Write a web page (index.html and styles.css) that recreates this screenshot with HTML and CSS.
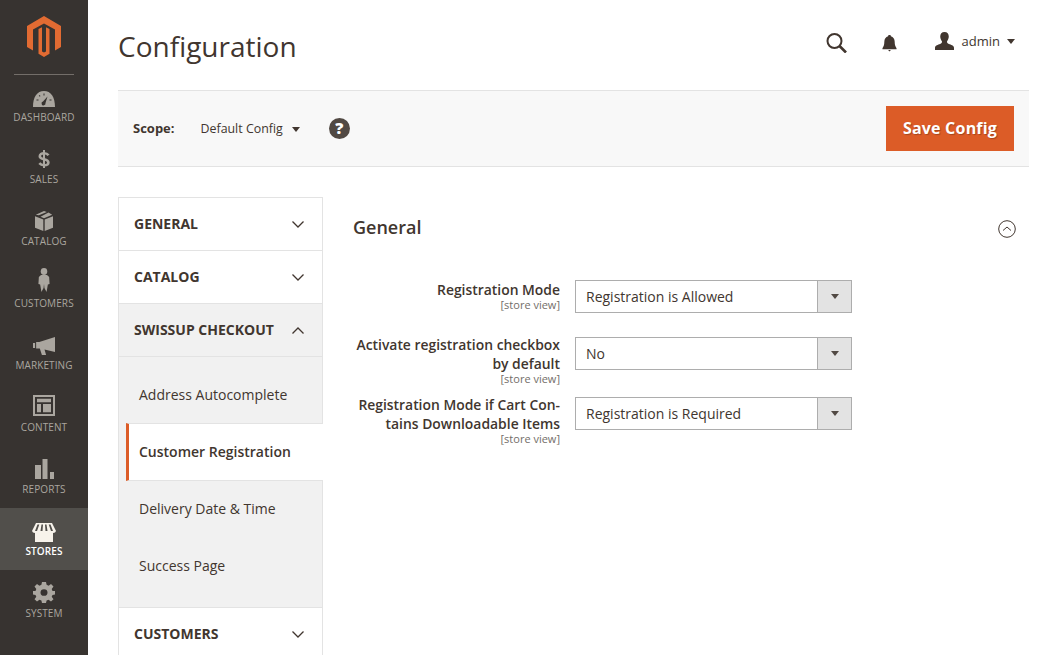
FILE: index.html
```html
<!DOCTYPE html>
<html lang="en">
<head>
<meta charset="utf-8">
<title>Configuration</title>
<link rel="stylesheet" href="styles.css">
</head>
<body>
<div class="app">
  <nav class="sidebar">
    <div class="logo">
      <svg width="36" height="42" viewBox="0 0 36 42"><path fill="#e26b32" d="M18 0 35 10V31L29 34.500V13.500L18 7.500 7 13.500V34.500L1 31V10Z"/><path fill="#e26b32" d="M12.500 13 16 11.200V35.500L18 36.500 20 35.500V11.200L23.500 13V37.800L18 41 12.500 37.800Z"/></svg>
    </div>
    <a class="nav-item"><svg class="nav-icon" width="22" height="16" viewBox="0 0 22 16"><path fill="#aaa69f" fill-rule="evenodd" d="M0 16C0 6 4 0 11 0s11 6 11 16zM14.500 5.500 10 10.500a2 2 0 1 0 2.500 1.500z"/><path fill="#373330" d="M3.500 8.500h2v1h-2zM6.500 4l1 1-.7.700-1-1zM10.500 2.500h1v2h-1zM16.500 8.500h2v1h-2z"/></svg><span>DASHBOARD</span></a>
    <a class="nav-item"><svg class="nav-icon nav-icon-low" width="12" height="18" viewBox="0 0 12 18"><path fill="#aaa69f" d="M5 0h2v18H5z"/><path fill="none" stroke="#aaa69f" stroke-width="2.600" d="M10.500 5.200C9.500 3.800 8 3.200 6 3.200 3.500 3.200 1.800 4.400 1.800 6.200 1.800 8.200 3.500 8.600 6 9.200 8.700 9.800 10.400 10.400 10.400 12.400 10.400 14.200 8.500 15.200 6 15.200 4 15.200 2.400 14.400 1.300 13.200"/></svg><span>SALES</span></a>
    <a class="nav-item"><svg class="nav-icon" width="18" height="20" viewBox="1 0 18 21" preserveAspectRatio="none"><path fill="#aaa69f" d="M1 5.500 9.300 9v12L1 17.500zM19 5.500 10.700 9v12l8.300-3.500zM10 0l2.800 1-8 3.400L1.800 4zM14.500 1.700 18.200 4 10 7.500 6.500 6z"/></svg><span>CATALOG</span></a>
    <a class="nav-item"><svg class="nav-icon nav-icon-low" width="12" height="24" viewBox="0 0 14 24" preserveAspectRatio="none"><ellipse fill="#aaa69f" cx="7" cy="3.500" rx="3.800" ry="3.400"/><path fill="#aaa69f" d="M3.500 7h7l2.500 2 .5 7-2 .5L10 24 7.500 20 7 16 6.500 20 4 24 2.500 16.500l-2-.5.500-7z"/></svg><span>CUSTOMERS</span></a>
    <a class="nav-item"><svg class="nav-icon" width="22" height="18" viewBox="1 1 21 18" preserveAspectRatio="none"><path fill="#aaa69f" d="M1 7h2v5H1zM4 6h3l15-5v15L12 13.500 13.500 19H9.500L7.500 12.500H4z"/></svg><span>MARKETING</span></a>
    <a class="nav-item"><svg class="nav-icon nav-icon-low" width="22" height="21" viewBox="0 0 22 22" preserveAspectRatio="none"><path fill="#aaa69f" fill-rule="evenodd" d="M0 0h22v22H0zM2 2v18h18V2z"/><path fill="#aaa69f" d="M4 4h14v3.500H4zM4 9.500h4V18H4zM10 9.500h8V18h-8z"/></svg><span>CONTENT</span></a>
    <a class="nav-item"><svg class="nav-icon" width="19" height="20" viewBox="0 0 19 20"><path fill="#aaa69f" d="M0 6h6v14H0zM7.500 0h5v20h-5zM15 13h4.500v7H15z"/></svg><span>REPORTS</span></a>
    <a class="nav-item active"><svg class="nav-icon nav-icon-high" width="24" height="19" viewBox="0 0 24 20" preserveAspectRatio="none"><path fill="#f7f3eb" fill-rule="evenodd" d="M4 0h16l4 8.500-1 1.500-2 .5V20H3V10.500L1 10 0 8.500zM5.500 1.500 3 8.500h2l2.300-7zM9.500 1.500 8.500 8.500h2l.5-7zM13 1.500l.5 7h2l-1-7zM16.700 1.500 19 8.500h2l-2.500-7z"/></svg><span>STORES</span></a>
    <a class="nav-item"><svg class="nav-icon" width="22" height="21" viewBox="0 0 22 22" preserveAspectRatio="none"><path fill="#aaa69f" fill-rule="evenodd" d="M9 0h4l.6 3 2 .8L18 2l2.500 2.800-1.800 2.500.8 2L22 9.500v3.500l-2.500.5-.8 2 1.800 2.500L18 20.500l-2.400-1.800-2 .8L13 22H9l-.6-2.500-2-.8L4 20.500 1.500 18l1.800-2.500-.8-2L0 13V9.500l2.500-.2.8-2L1.500 4.800 4 2l2.400 1.800 2-.8zM11 7.500a3.500 3.500 0 1 0 0 7 3.500 3.500 0 0 0 0-7z"/></svg><span>SYSTEM</span></a>
  </nav>

  <main class="main">
    <header class="page-header">
      <h1 class="page-title">Configuration</h1>
      <div class="header-actions">
        <svg class="search-icon" width="21" height="20" viewBox="0 0 21 20"><circle cx="8.500" cy="8" r="7" fill="none" stroke="#41362f" stroke-width="2"/><path d="M13.500 13l6.500 6.500" stroke="#41362f" stroke-width="2.600" fill="none"/></svg>
        <svg class="bell-icon" width="15" height="17" viewBox="0 0 16 18" preserveAspectRatio="none"><path fill="#41362f" d="M8 0c1 0 1.500.6 1.500 1.300C12 2 13.500 4 13.500 7c0 4 1 5.500 2 7v1H.5v-1c1-1.500 2-3 2-7 0-3 1.500-5 4-5.700C6.500.6 7 0 8 0zM6.500 16h3L8 17.500z"/></svg>
        <div class="user">
          <svg class="user-icon" width="19" height="18" viewBox="0 0 20 20" preserveAspectRatio="none"><path fill="#41362f" d="M10 0c3 0 4.500 2 4.500 5 0 2-.8 4-1.800 5.200-.3 1.500.3 2.300 2 3 2 .8 5.300 1.500 5.300 4.300V20H0v-2.500c0-2.800 3.300-3.500 5.300-4.300 1.700-.7 2.300-1.500 2-3C6.300 9 5.500 7 5.500 5c0-3 1.500-5 4.500-5z"/></svg>
          <span class="user-name">admin</span>
          <span class="caret"></span>
        </div>
      </div>
    </header>

    <section class="actions-bar">
      <span class="scope-label">Scope:</span>
      <span class="scope-value">Default Config</span>
      <span class="caret caret-scope"></span>
      <span class="help">?</span>
      <button class="save-btn" type="button">Save Config</button>
    </section>

    <div class="columns">
      <aside class="tabs">
        <div class="tab"><span>GENERAL</span><svg class="chev" width="12" height="7" viewBox="0 0 12 7"><path d="M.5.500 6 6l5.500-5.500" fill="none" stroke="#41362f" stroke-width="1.300"/></svg></div>
        <div class="tab"><span>CATALOG</span><svg class="chev" width="12" height="7" viewBox="0 0 12 7"><path d="M.5.500 6 6l5.500-5.500" fill="none" stroke="#41362f" stroke-width="1.300"/></svg></div>
        <div class="tab tab-open"><span>SWISSUP CHECKOUT</span><svg class="chev" width="12" height="7" viewBox="0 0 12 7"><path d="M.5 6.500 6 1l5.500 5.500" fill="none" stroke="#41362f" stroke-width="1.300"/></svg></div>
        <div class="subtabs">
          <a class="subtab subtab-first">Address Autocomplete</a>
          <a class="subtab subtab-current">Customer Registration</a>
          <a class="subtab">Delivery Date &amp; Time</a>
          <a class="subtab">Success Page</a>
        </div>
        <div class="tab"><span>CUSTOMERS</span><svg class="chev" width="12" height="7" viewBox="0 0 12 7"><path d="M.5.500 6 6l5.500-5.500" fill="none" stroke="#41362f" stroke-width="1.300"/></svg></div>
      </aside>

      <section class="panel">
        <div class="panel-head">
          <h2 class="panel-title">General</h2>
          <svg class="collapse" width="18" height="18" viewBox="0 0 18 18"><circle cx="9" cy="9" r="8.300" fill="none" stroke="#41362f" stroke-width="1"/><path d="M5 10.500 9 7l4 3.500" fill="none" stroke="#41362f" stroke-width="1"/></svg>
        </div>
        <div class="fields">
          <div class="field">
            <div class="label label-single"><strong>Registration Mode</strong><small>[store view]</small></div>
            <div class="select"><span>Registration is Allowed</span><i class="select-btn"><b class="caret caret-select"></b></i></div>
          </div>
          <div class="field">
            <div class="label"><strong>Activate registration checkbox<br>by default</strong><small>[store view]</small></div>
            <div class="select"><span>No</span><i class="select-btn"><b class="caret caret-select"></b></i></div>
          </div>
          <div class="field">
            <div class="label"><strong>Registration Mode if Cart Con-<br>tains Downloadable Items</strong><small>[store view]</small></div>
            <div class="select"><span>Registration is Required</span><i class="select-btn"><b class="caret caret-select"></b></i></div>
          </div>
        </div>
      </section>
    </div>
  </main>
</div>
</body>
</html>
```

FILE: styles.css
```css
* { box-sizing: border-box; }
html, body { margin: 0; height: 100%; overflow: hidden; }
body { font-family: "Open Sans", "Liberation Sans", sans-serif; color: #41362f; background: #fff; }

.app { display: flex; height: 655px; overflow: hidden; }

.sidebar { flex: 0 0 88px; background: #373330; display: flex; flex-direction: column; }
.logo { height: 75px; margin: 0 14px -1px; padding-top: 16px; padding-left: 12px; border-bottom: 1px solid #736e69; }
.logo svg { display: block; }
.nav-item { height: 62px; display: flex; flex-direction: column; align-items: center; justify-content: flex-end; padding-bottom: 12px; font-size: 10px; line-height: 14px; color: #aaa69f; letter-spacing: .1px; }
.nav-icon { display: block; margin-bottom: 3px; }
.nav-icon-low { margin-bottom: 4px; }
.nav-icon-high { margin-bottom: 2px; }
.nav-item.active { background: #514f4b; color: #fff; font-weight: 600; }

.main { flex: 1; min-width: 0; padding: 0 26px 0 30px; }

.page-header { height: 90px; display: flex; align-items: center; justify-content: space-between; }
.page-title { margin: 2px 0 0; font-size: 28px; line-height: 38px; font-weight: 400; color: #41362f; }
.header-actions { display: flex; align-items: center; padding-right: 14px; margin-bottom: 5px; }
.search-icon { margin-right: 35px; }
.bell-icon { margin-right: 38px; margin-top: 1px; }
.user { display: flex; align-items: center; margin-bottom: 3px; }
.user-icon { display: block; }
.user-name { font-size: 13px; margin-left: 8px; margin-right: 7px; }
.caret { display: inline-block; width: 0; height: 0; border-left: 4px solid transparent; border-right: 4px solid transparent; border-top: 5px solid #41362f; }

.actions-bar { height: 77px; background: #f8f8f8; border-top: 1px solid #e3e3e3; border-bottom: 1px solid #e3e3e3; display: flex; align-items: center; padding: 0 15px; }
.scope-label { font-size: 13px; font-weight: 700; margin: 0 26px 1px 0; }
.scope-value { font-size: 12.400px; margin: 0 9px 0 0; }
.caret-scope { margin: 1px 29px 0 0; }
.help { width: 21px; height: 21px; margin-bottom: 1px; border-radius: 50%; background: #514943; color: #fff; font-size: 16px; font-weight: 800; line-height: 21px; text-align: center; }
.save-btn { margin-left: auto; width: 128px; height: 45px; border: 0; background: #dc5c27; color: #fff; font-family: inherit; font-size: 16px; font-weight: 700; letter-spacing: .2px; text-shadow: 1px 1px 1px rgba(0,0,0,.25); padding: 0 0 2px; }

.columns { display: flex; padding-top: 30px; }
.tabs { flex: 0 0 205px; border: 1px solid #e3e3e3; border-bottom: 0; }
.tab { height: 53px; display: flex; align-items: center; justify-content: space-between; padding: 0 18px 2px 15px; font-size: 14px; font-weight: 700; border-bottom: 1px solid #e3e3e3; color: #41362f; }
.tab:last-child { border-bottom: 0; }
.tab-open { background: #f1f1f1; }
.chev { display: block; margin-top: 2px; }
.subtabs { background: #f1f1f1; border-bottom: 1px solid #e3e3e3; padding: 9px 0 12px; }
.subtab { display: flex; align-items: center; height: 57px; padding: 0 0 2px 20px; font-size: 14px; color: #41362f; }
.subtab-first { padding-bottom: 0; }
.subtab-current { height: 58px; margin-left: 7px; margin-right: -1px; padding-left: 10px; background: #fff; border-left: 3px solid #dc5c27; border-top: 1px solid #e3e3e3; border-bottom: 1px solid #e3e3e3; font-weight: 600; }

.panel { flex: 1; min-width: 0; padding-left: 30px; }
.panel-head { height: 83px; display: flex; align-items: flex-start; justify-content: space-between; padding: 18px 13px 0 0; }
.panel-title { margin: 0; font-size: 18px; line-height: 24px; font-weight: 600; }
.collapse { margin-top: 5px; }
.fields { display: grid; grid-template-rows: 57px 60px auto; }
.field { display: flex; align-items: flex-start; }
.label { flex: 0 0 207px; margin: -2px 15px 0 0; text-align: right; }
.label-single { margin-top: 0; }
.label strong { display: block; font-size: 13.900px; line-height: 19px; font-weight: 600; }
.label small { display: block; margin-top: -1px; font-size: 11px; line-height: 13px; color: #736e69; }
.select { flex: 0 0 277px; height: 33px; display: flex; align-items: center; justify-content: space-between; border: 1px solid #adadad; padding-left: 10px; font-size: 14px; }
.select-btn { width: 34px; height: 31px; background: #e3e3e3; border-left: 1px solid #adadad; display: flex; align-items: center; justify-content: center; }
.caret-select { border-top-color: #514943; }
```
